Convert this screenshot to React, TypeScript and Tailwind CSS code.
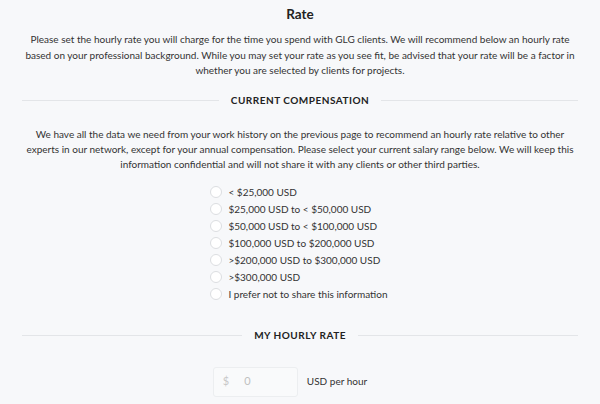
import { useState } from "react";

const ranges = [
  "< $25,000 USD",
  "$25,000 USD to < $50,000 USD",
  "$50,000 USD to < $100,000 USD",
  "$100,000 USD to $200,000 USD",
  ">$200,000 USD to $300,000 USD",
  ">$300,000 USD",
  "I prefer not to share this information",
];

function Divider({ label }: { label: string }) {
  return (
    <div className="flex items-center gap-3">
      <div className="h-px flex-1 bg-[#e3e5e8]" />
      <h2 className="text-[10px] font-bold uppercase tracking-[0.05em] text-[#222]">{label}</h2>
      <div className="h-px flex-1 bg-[#e3e5e8]" />
    </div>
  );
}

export default function App() {
  const [salary, setSalary] = useState<string | null>(null);
  const [rate, setRate] = useState("");

  return (
    <main
      className="min-h-screen bg-[#f7f8fa] px-[22px] pt-[5px] text-[#333]"
      style={{ fontFamily: "Lato, 'Open Sans', sans-serif" }}
    >
      <h1 className="text-center text-[13.5px] font-bold leading-[18px] text-[#222]">Rate</h1>
      <p className="mt-[9px] text-center text-[10px] leading-[15.5px]">
        Please set the hourly rate you will charge for the time you spend with GLG clients. We will recommend below an hourly rate
        based on your professional background. While you may set your rate as you see fit, be advised that your rate will be a factor in
        whether you are selected by clients for projects.
      </p>

      <div className="mt-[14px]">
        <Divider label="Current Compensation" />
      </div>

      <p className="mt-[19px] text-center text-[10px] leading-[15px]">
        We have all the data we need from your work history on the previous page to recommend an hourly rate relative to other
        experts in our network, except for your annual compensation. Please select your current salary range below. We will keep this
        information confidential and will not share it with any clients or other third parties.
      </p>

      {/* Salary ranges */}
      <div className="mx-auto mt-[12px] w-fit pr-[2px]">
        {ranges.map((r) => (
          <label key={r} className="flex h-[17px] cursor-pointer items-center gap-[6px] text-[10px]">
            <input
              type="radio"
              name="salary"
              checked={salary === r}
              onChange={() => setSalary(r)}
              className="sr-only"
            />
            <span
              className={`h-[12px] w-[12px] rounded-full border bg-white ${
                salary === r ? "border-[#2b6cb0] ring-2 ring-inset ring-[#2b6cb0]" : "border-[#dcdee1]"
              }`}
            />
            <span>{r}</span>
          </label>
        ))}
      </div>

      <div className="mt-[25px]">
        <Divider label="My Hourly Rate" />
      </div>

      <div className="mt-[24px] flex items-center justify-center gap-[9px] pr-[20px]">
        <div className="flex h-[30px] w-[85px] items-center rounded-[3px] border border-[#eceef0] bg-[#f9fafb] px-[9px]">
          <span className="text-[11px] text-[#c8c8c8]">$</span>
          <input
            value={rate}
            onChange={(e) => setRate(e.target.value)}
            placeholder="0"
            className="ml-[15px] w-[40px] bg-transparent text-[11px] text-[#333] outline-none placeholder:text-[#c0c0c0]"
          />
        </div>
        <span className="text-[10px]">USD per hour</span>
      </div>
    </main>
  );
}
